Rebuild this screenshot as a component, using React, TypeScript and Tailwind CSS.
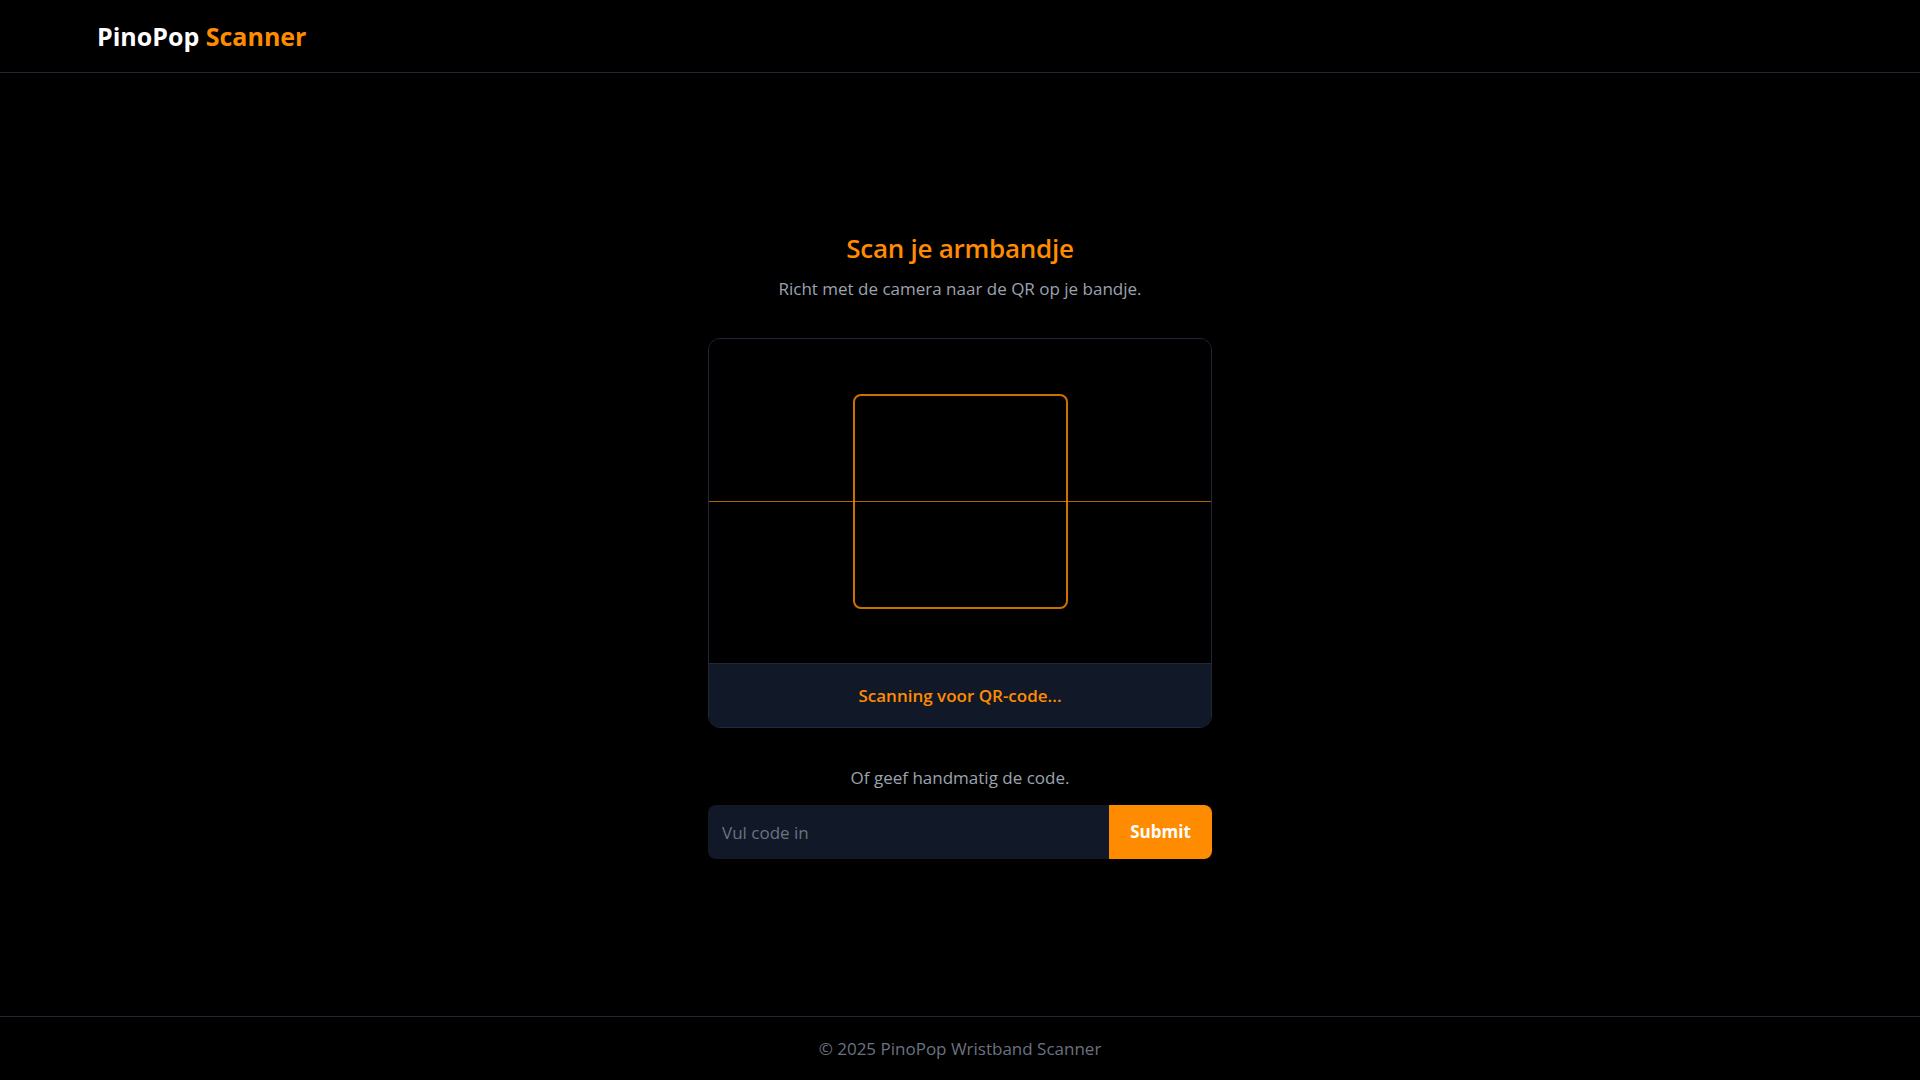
import React from "react";

export default function App() {
  return (
    <div
      className="min-h-screen flex flex-col bg-black text-white"
      style={{ fontFamily: '"Open Sans", "Noto Sans", sans-serif' }}
    >
      <header className="h-[73px] border-b border-[#1f2937] flex items-center px-[97px]">
        <h1 className="text-[25px] font-bold leading-none">
          <span className="text-white">PinoPop </span>
          <span className="text-[#ff8c00]">Scanner</span>
        </h1>
      </header>

      <main className="flex-1 flex items-center justify-center">
        <div className="w-[504px] flex flex-col items-center">
          <h2 className="text-[26px] leading-[36px] font-semibold text-[#ff8c00] tracking-[-0.01em]">
            Scan je armbandje
          </h2>
          <p className="mt-[9px] text-[17px] leading-[28px] text-[#9ca3af]">
            Richt met de camera naar de QR op je bandje.
          </p>

          <div className="mt-[35px] w-full rounded-xl border border-[#1f2937] overflow-hidden">
            <div className="relative h-[324px] bg-black flex items-center justify-center">
              <div className="w-[215px] h-[215px] rounded-lg border-2 border-[#ff8c00]/80" />
              <div className="absolute left-0 right-0 top-[162px] h-px bg-[#ff8c00]/70" />
            </div>
            <div className="h-[64px] border-t border-[#1f2937] bg-[#111827] flex items-center justify-center">
              <span className="text-[17px] font-semibold text-[#ff8c00]">
                Scanning voor QR-code...
              </span>
            </div>
          </div>

          <p className="mt-[36px] text-[17px] leading-[28px] text-[#9ca3af]">
            Of geef handmatig de code.
          </p>

          <div className="mt-[13px] w-full flex h-[54px]">
            <input
              type="text"
              placeholder="Vul code in"
              className="flex-1 min-w-0 h-full rounded-l-lg bg-[#111827] px-[14px] text-[17px] text-white placeholder:text-[#6b7280] outline-none"
            />
            <button className="w-[103px] h-full rounded-r-lg bg-[#ff8c00] text-white text-[17px] font-bold">
              Submit
            </button>
          </div>
        </div>
      </main>

      <footer className="h-[64px] border-t border-[#1f2937] flex items-center justify-center">
        <span className="text-[17px] text-[#6b7280]">
          © 2025 PinoPop Wristband Scanner
        </span>
      </footer>
    </div>
  );
}
